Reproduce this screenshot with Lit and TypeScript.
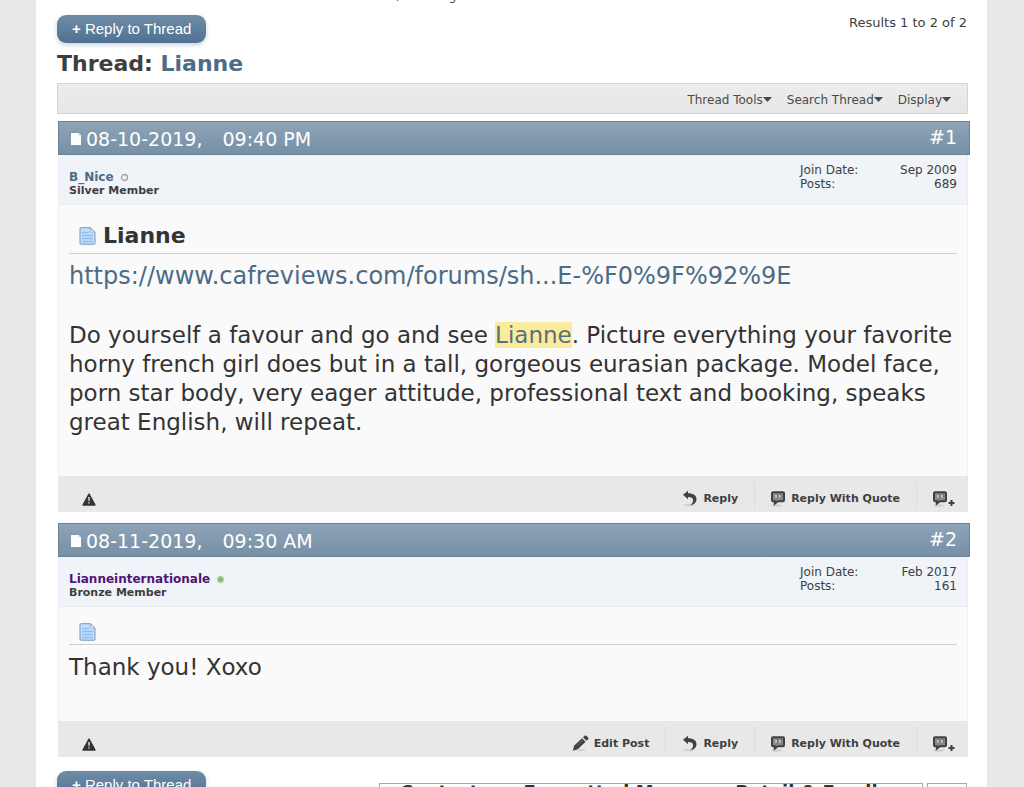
import { LitElement, html, svg, css, nothing } from "lit";
import { customElement, property } from "lit/decorators.js";

interface Post {
  number: number;
  date: string;
  time: string;
  user: string;
  rank: string;
  online: boolean;
  joined: string;
  posts: string;
  title: string;
  editable: boolean;
}

const POSTS: Post[] = [
  { number: 1, date: "08-10-2019,", time: "09:40 PM", user: "B_Nice", rank: "Silver Member", online: false, joined: "Sep 2009", posts: "689", title: "Lianne", editable: false },
  { number: 2, date: "08-11-2019,", time: "09:30 AM", user: "Lianneinternationale", rank: "Bronze Member", online: true, joined: "Feb 2017", posts: "161", title: "", editable: true },
];

const pageIcon = html`<svg width="12" height="15" viewBox="0 0 12 15" aria-hidden="true">
  <path d="M.5.5h8l3 3v10H.5z" fill="#fdfefe" stroke="#8397a8"/><path d="M8.500.5v3h3" fill="#cfd9e2"/></svg>`;

const noteIcon = html`<svg width="17" height="18" viewBox="0 0 17 18" aria-hidden="true">
  <path d="M2 .7h9.500L16 5v11.200c0 .6-.4 1-1 1H2c-.6 0-1-.4-1-1V1.700c0-.6.4-1 1-1z" fill="#c3dffc" stroke="#7b96b8"/>
  <path d="M11.300 1v4H16z" fill="#eef6ff" stroke="#8aa5c5" stroke-width=".8"/>
  <path d="M3 5.500h7M3 8.500h11M3 11.500h11M3 14.500h11" stroke="#8fbdee" stroke-width="1.300"/></svg>`;

const warnIcon = html`<svg width="14" height="13" viewBox="0 0 14 13" aria-hidden="true">
  <path d="M7 1 13 12H1z" fill="#333" stroke="#333" stroke-width="1.400" stroke-linejoin="round"/>
  <path d="M6.200 4h1.600l-.3 4.200h-1zM6.300 9.200h1.400v1.400H6.300z" fill="#e8e8e8"/></svg>`;

const replyIcon = html`<svg width="16" height="17" viewBox="0 0 16 17" aria-hidden="true">
  <ellipse cx="7" cy="15" rx="6" ry="1.300" fill="#d4d4d4"/>
  <path d="M1 4.800 6 .8v2.400c5.500 0 8.500 2.200 8.500 6 0 3.200-2.400 5.300-6.500 6.300 2-1.700 3.100-3.200 3.100-5.200 0-2.300-1.700-3.300-5.100-3.300v2.200z" fill="#404040"/></svg>`;

const bubble = svg`<ellipse cx="6" cy="14.500" rx="6" ry="1.200" fill="#cfcfcf"/>
  <path d="M2 1.200h10c.6 0 1 .4 1 1v7c0 .6-.4 1-1 1H6.800L3.800 12.600v-2.400H2c-.6 0-1-.4-1-1v-7c0-.6.4-1 1-1z" fill="#8a8a8a" stroke="#404040" stroke-width="2"/>
  <path d="M4 3.200h2.200v3.200l-1.200 1.800M8 3.200h2.200v3.200L9 8.200" fill="#dcdcdc" stroke="#404040" stroke-width=".6"/>`;

const quoteIcon = html`<svg width="15" height="16" viewBox="0 0 15 16" overflow="visible" aria-hidden="true">${bubble}</svg>`;
const multiIcon = html`<svg width="22" height="16" viewBox="0 0 22 16" aria-hidden="true">${bubble}
  <path d="M18.500 8v7.500M15 12h7" stroke="#e8e8e8" stroke-width="4"/>
  <path d="M18.500 9v6M15.500 12h6" stroke="#404040" stroke-width="2"/></svg>`;

const pencilIcon = html`<svg width="17" height="17" viewBox="0 0 17 17" aria-hidden="true">
  <ellipse cx="8" cy="15" rx="6" ry="1.200" fill="#d4d4d4"/>
  <path d="M.8 15.800 2.300 10.500 10 3.200l3.600 3.500L6 14z" fill="#404040"/>
  <path d="M11 2.300 12.600.8c.6-.5 1.200-.5 1.700 0l1.800 1.700c.5.500.5 1.100 0 1.700L14.500 5.800z" fill="#404040"/>
  <path d="m4.500 11 6.300-6" stroke="#777" stroke-width=".8"/></svg>`;

@customElement("forum-post")
export class ForumPost extends LitElement {
  @property({ attribute: false }) post!: Post;

  static styles = css`
    :host { display: block; color: #3e3e3e; font-size: 11px; line-height: 14px; }
    a { color: #4b6b86; text-decoration: none; }
    svg { display: block; flex: none; }
    .head {
      display: flex; justify-content: space-between; box-sizing: border-box; height: 34px;
      margin-right: -2px; padding: 0 12px 0 11px; border: 1px solid #6b8294; color: #fff;
      background: linear-gradient(#8fa3b8, #7690a6); font-size: 19px; line-height: 34px;
    }
    .when { display: flex; align-items: center; gap: 4px; padding-top: 2px; }
    .time { margin-left: 20px; }
    .head a { color: #fff; line-height: 31px; }
    .details {
      display: flex; justify-content: space-between; box-sizing: border-box; height: 50px;
      padding: 8px 10px; border: 1px solid #e9edf1; border-top: 0; background: #f0f3f8;
    }
    .who { padding-top: 7px; font-weight: bold; }
    .name { display: flex; align-items: center; gap: 6px; font-size: 12px; }
    .self { color: #521277; }
    .stats {
      display: grid; grid-template-columns: 1fr auto; width: 157px; margin: 0; align-content: start; font-size: 12px;
    }
    .stats dd { margin: 0; text-align: right; }
    .body {
      padding: 17px 10px 39px; border: 1px solid #f0f0f0; border-width: 0 1px; background: #fafafa;
      color: #333; font-size: 23px; line-height: 29px;
    }
    .title {
      display: flex; align-items: center; gap: 7px; margin: 0 0 8px; padding: 0 0 3px 10px; min-height: 28px;
      border-bottom: 1px solid #cfcfcf; font-size: 22px; line-height: 28px;
    }
    .bare { min-height: 18px; margin-top: -1px; }
    .text { margin: 0; }
    .link { margin: 0 0 30px; font-size: 24px; }
    .mark { background: #fbeb9c; color: #57707c; }
    .foot {
      display: flex; justify-content: space-between; align-items: flex-end; box-sizing: border-box;
      height: 36px; padding: 0 13px 3px 24px; background: #e8e8e8;
    }
    .actions { display: flex; }
    button {
      display: flex; align-items: center; gap: 5px; margin: 0; padding: 6px 16px 0; height: 27px; border: 0;
      background: none; color: #404040; font: bold 11px/18px "DejaVu Sans", sans-serif;
    }
    .actions button + button { border-left: 1px solid #dcdcdc; }
    .actions button:last-child { padding-right: 0; }
    .report { padding: 0; height: 20px; }
  `;

  render() {
    const p = this.post;
    return html`<article>
      <header class="head">
        <span class="when">${pageIcon}<span>${p.date}<span class="time">${p.time}</span></span></span>
        <a href="#post${p.number}">#${p.number}</a>
      </header>
      <div class="details">
        <div class="who">
          <div class="name"><a class=${p.online ? "self" : ""} href="#member">${p.user}</a>
            <svg width="9" height="9" viewBox="0 0 9 9" aria-hidden="true">
              <circle cx="4.500" cy="4.500" r="3" fill=${p.online ? "#86b878" : "#f0f0f0"} stroke=${p.online ? "#b0d6a6" : "#a0a0a0"} stroke-width="1.300"/></svg>
          </div>
          ${p.rank}
        </div>
        <dl class="stats"><dt>Join Date:</dt><dd>${p.joined}</dd><dt>Posts:</dt><dd>${p.posts}</dd></dl>
      </div>
      <div class="body">
        <h2 class="title ${p.title ? "" : "bare"}">${noteIcon}${p.title}</h2>
        ${p.number === 1
          ? html`<p class="link"><a href="#thread">https://www.cafreviews.com/forums/sh...E-%F0%9F%92%9E</a></p>
            <p class="text">Do yourself a favour and go and see <a class="mark" href="#lianne">Lianne</a>. Picture everything your favorite horny french girl does but in a tall, gorgeous eurasian package. Model face, porn star body, very eager attitude, professional text and booking, speaks great English, will repeat.</p>`
          : html`<p class="text">Thank you! Xoxo</p>`}
      </div>
      <footer class="foot">
        <button class="report" aria-label="Report post">${warnIcon}</button>
        <div class="actions">
          ${p.editable ? html`<button>${pencilIcon}Edit Post</button>` : nothing}
          <button>${replyIcon}Reply</button>
          <button>${quoteIcon}Reply With Quote</button>
          <button aria-label="Multi-quote">${multiIcon}</button>
        </div>
      </footer>
    </article>`;
  }
}

@customElement("app-root")
export class AppRoot extends LitElement {
  static styles = css`
    :host {
      display: block; height: 100vh; overflow: hidden; background: #e8e8e8;
      color: #3e3e3e; font-family: "DejaVu Sans", Verdana, sans-serif;
    }
    .page { margin: 0 37px 0 36px; padding: 0 19px 0 21px; min-height: 100vh; background: #fff; }
    .crumbs {
      display: flex; align-items: flex-end; height: 3px; overflow: hidden;
      font-size: 12px; line-height: 14px; gap: 49px; padding-left: 339px;
    }
    .top { display: flex; justify-content: space-between; align-items: flex-start; padding-top: 12px; }
    .reply {
      height: 28px; padding: 0 15px; border: 0; border-radius: 9px; color: #fff;
      background: linear-gradient(#6e8ca6, #4f7193); box-shadow: 0 2px 5px #c8d0da;
      font: 15px/28px "Liberation Sans", sans-serif;
    }
    .results { font-size: 13px; line-height: 16px; padding-right: 1px; }
    .thread { margin: 6px 0 4px; font-size: 22px; line-height: 30px; }
    .thread a { color: #4b6b86; text-decoration: none; }
    .tools {
      display: flex; justify-content: flex-end; align-items: center; gap: 15px; box-sizing: border-box; height: 31px;
      margin-bottom: 7px; padding: 2px 16px 0 0; border: 1px solid #d6d4d2; background: linear-gradient(#ededed, #e6e6e6);
    }
    .tools button {
      display: flex; align-items: center; gap: 0; padding: 0; border: 0; background: none; color: #4a4a4a;
      font: 12px/14px "DejaVu Sans", sans-serif;
    }
    .posts { display: grid; gap: 11px; padding-left: 1px; }
    .bottom { display: flex; justify-content: space-between; align-items: flex-start; padding-top: 14px; }
    .jump { display: flex; gap: 4px; padding: 12px 1px 0 0; }
    .forum, .go { box-sizing: border-box; height: 18px; border: 1px solid #a8a8a8; background: #fff; }
    .forum {
      width: 544px; padding: 0 20px; appearance: none; color: #333;
      font: bold 18px/16px "DejaVu Sans", sans-serif;
    }
    .go { width: 40px; }
  `;

  render() {
    const caret = html`<svg width="9" height="5" viewBox="0 0 9 5" aria-hidden="true"><path d="M0 0h9L4.500 5z" fill="#4a4a4a"/></svg>`;
    return html`<main class="page">
      <div class="crumbs"><span>,</span><span>g</span></div>
      <div class="top"><button class="reply"><b>+</b> Reply to Thread</button><span class="results">Results 1 to 2 of 2</span></div>
      <h1 class="thread">Thread: <a href="#thread">Lianne</a></h1>
      <div class="tools">${["Thread Tools", "Search Thread", "Display"].map((t) => html`<button>${t}${caret}</button>`)}</div>
      <div class="posts">${POSTS.map((p) => html`<forum-post .post=${p}></forum-post>`)}</div>
      <div class="bottom">
        <button class="reply"><b>+</b> Reply to Thread</button>
        <div class="jump">
          <select class="forum" aria-label="Forum"><option>Contactors, Formatted Manager, Retail &amp; Feedback</option></select>
          <button class="go" aria-label="Go"></button>
        </div>
      </div>
    </main>`;
  }
}
